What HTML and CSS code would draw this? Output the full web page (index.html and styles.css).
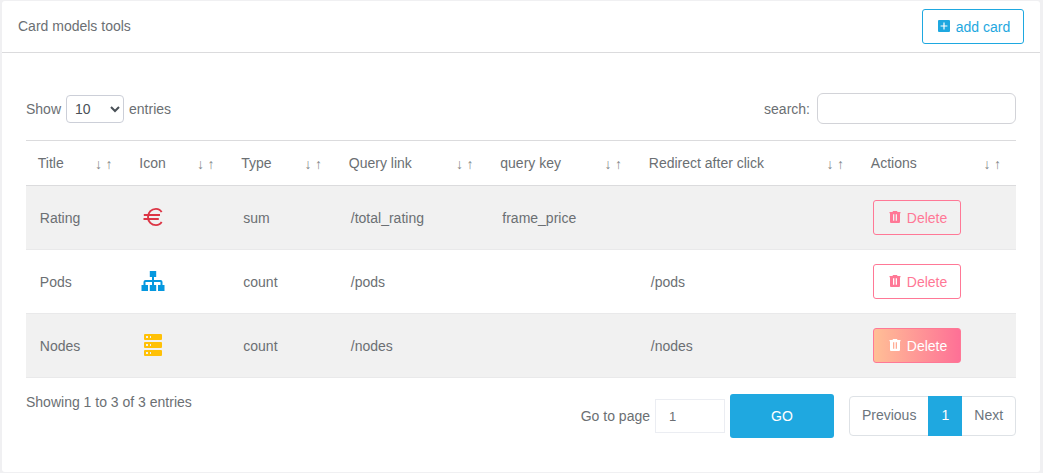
FILE: index.html
```html
<!DOCTYPE html>
<html lang="en">
<head>
<meta charset="utf-8">
<title>Card models tools</title>
<link rel="stylesheet" href="styles.css">
</head>
<body>
<svg class="sprite" width="0" height="0" aria-hidden="true">
  <symbol id="trash" viewBox="0 0 12 12">
    <path fill-rule="evenodd" d="M.5 1H3.5L4 0H8L8.500 1H11.500V2.200H.5ZM1 2.200H11V11Q11 12 10 12H2Q1 12 1 11ZM4 3.300V9.800H5.300V3.300ZM6.700 3.300V9.800H8V3.300Z"/>
  </symbol>
</svg>
<main class="card">
  <header class="card-header">
    <span class="title">Card models tools</span>
    <button class="btn btn-add"><svg class="add-icon" viewBox="0 0 12 12"><path fill-rule="evenodd" d="M1 0H11Q12 0 12 1V11Q12 12 11 12H1Q0 12 0 11V1Q0 0 1 0ZM5.400 2.600V5.400H2.600V6.600H5.400V9.400H6.600V6.600H9.400V5.400H6.600V2.600Z"/></svg>add card</button>
  </header>
  <section class="card-body">
    <div class="toolbar">
      <label class="length">Show <select><option>10</option></select> entries</label>
      <label class="search">search: <input type="text"></label>
    </div>
    <table>
      <colgroup><col class="c-title"><col class="c-icon"><col class="c-type"><col class="c-link"><col class="c-key"><col class="c-redirect"><col class="c-actions"></colgroup>
      <thead>
        <tr>
          <th><div class="head">Title<span class="sort"><i>↓</i><i>↑</i></span></div></th>
          <th><div class="head">Icon<span class="sort"><i>↓</i><i>↑</i></span></div></th>
          <th><div class="head">Type<span class="sort"><i>↓</i><i>↑</i></span></div></th>
          <th><div class="head">Query link<span class="sort"><i>↓</i><i>↑</i></span></div></th>
          <th><div class="head">query key<span class="sort"><i>↓</i><i>↑</i></span></div></th>
          <th><div class="head">Redirect after click<span class="sort"><i>↓</i><i>↑</i></span></div></th>
          <th><div class="head">Actions<span class="sort"><i>↓</i><i>↑</i></span></div></th>
        </tr>
      </thead>
      <tbody>
        <tr>
          <td>Rating</td>
          <td><svg class="icon euro" viewBox="0 0 24 24"><path d="M20.600 7.200C19.500 5 17.600 3.900 15 3.900C10.500 3.900 7 7.200 7 12S10.500 20.100 15 20.100C17.600 20.100 19.500 19 20.600 16.800M2.800 10H19M2.500 14H17.800"/></svg></td>
          <td>sum</td><td>/total_rating</td><td>frame_price</td><td></td>
          <td><button class="btn btn-delete"><svg class="trash"><use href="#trash"/></svg>Delete</button></td>
        </tr>
        <tr>
          <td>Pods</td>
          <td><svg class="icon sitemap" viewBox="0 0 24 24"><path d="M8.800 2H15.200V8H13V11H19.500Q21.500 11 21.500 13V16H23.500V22H17V16H19.500V13H13V16H15.200V22H8.800V16H11V13H4.500V16H7V22H.5V16H2.500V13Q2.500 11 4.500 11H11V8H8.800Z"/></svg></td>
          <td>count</td><td>/pods</td><td></td><td>/pods</td>
          <td><button class="btn btn-delete"><svg class="trash"><use href="#trash"/></svg>Delete</button></td>
        </tr>
        <tr>
          <td>Nodes</td>
          <td><svg class="icon server" viewBox="0 0 24 24"><path fill-rule="evenodd" d="M4 1H20Q21 1 21 2V6Q21 7 20 7H4Q3 7 3 6V2Q3 1 4 1ZM5 3V5H7V3ZM9 3V5H10V3ZM4 9H20Q21 9 21 10V14Q21 15 20 15H4Q3 15 3 14V10Q3 9 4 9ZM5 11V13H7V11ZM9 11V13H10V11ZM4 17H20Q21 17 21 18V22Q21 23 20 23H4Q3 23 3 22V18Q3 17 4 17ZM5 19V21H7V19ZM9 19V21H10V19Z"/></svg></td>
          <td>count</td><td>/nodes</td><td></td><td>/nodes</td>
          <td><button class="btn btn-delete active"><svg class="trash"><use href="#trash"/></svg>Delete</button></td>
        </tr>
      </tbody>
    </table>
    <footer class="table-footer">
      <div class="info">Showing 1 to 3 of 3 entries</div>
      <div class="goto"><label for="page">Go to page</label><input id="page" type="text" value="1"><button class="btn-go">GO</button></div>
      <nav class="pagination"><a>Previous</a><a class="current">1</a><a>Next</a></nav>
    </footer>
  </section>
</main>
</body>
</html>
```

FILE: styles.css
```css
* { box-sizing: border-box; }
body {
  margin: 0;
  height: 473px;
  padding: 1px 3px 1px 2px;
  overflow: hidden;
  background: #f0f0f2;
  color: #6b6f73;
  font: 14px/20px "Liberation Sans", Arial, sans-serif;
}
.sprite { position: absolute; }
button, input, select { font: inherit; color: inherit; }
.card { height: 471px; background: #fff; border-radius: 3px; }
.card-header {
  display: flex;
  align-items: center;
  justify-content: space-between;
  height: 52px;
  padding: 0 16px;
  border-bottom: 1px solid #dbdbdd;
}
.card-header .title { margin-top: -1px; }
.btn {
  display: flex;
  align-items: center;
  justify-content: center;
  height: 35px;
  padding: 0 0 0 2px;
  border: 1px solid;
  border-radius: 3px;
  background: none;
}
.btn svg { width: 12px; height: 12px; fill: currentColor; flex: none; }
.btn-add { width: 102px; color: #1ea8e0; }
.btn-add .add-icon { margin: -2px 6px 0 0; }
.card-body { padding: 40px 24px 0; }
.toolbar { display: flex; justify-content: space-between; height: 47px; }
.length, .search { display: flex; align-items: center; height: 32px; }
.search { height: 31px; }
.length select {
  width: 58px;
  height: 28px;
  margin: 0 5px;
  padding: 0 0 0 4px;
  border: 1px solid #cccfd8;
  border-radius: 4px;
  background: #fff;
  color: #495057;
}
.search input {
  width: 199px;
  height: 31px;
  margin-left: 7px;
  border: 1px solid #d2d3d8;
  border-radius: 6px;
  background: #fff;
}
table { width: 990px; table-layout: fixed; border-spacing: 0; }
.c-title { width: 101.500px; }
.c-icon { width: 102px; }
.c-type { width: 107.500px; }
.c-link { width: 151.500px; }
.c-key { width: 148.500px; }
.c-redirect { width: 222px; }
.c-actions { width: 157px; }
th {
  height: 46px;
  padding: 0 15px 0 11.800px;
  border-top: 1px solid #dbdbdd;
  border-bottom: 1px solid #dbdbdd;
  font-weight: 400;
  text-align: left;
}
.head { display: flex; justify-content: space-between; white-space: nowrap; }
.sort { display: flex; gap: 3.500px; padding-top: 1px; color: #858789; }
.sort i { font-style: normal; }
td { height: 64px; padding: 0 14px 0 13.800px; border-bottom: 1px solid #e9e9ea; }
td:last-child { padding-left: 14px; }
tbody tr:nth-child(odd) { background: #f1f1f1; }
.icon { display: block; width: 24px; height: 24px; margin: -2px 0 0 -.3px; fill: currentColor; }
.euro { color: #dc3545; fill: none; stroke: currentColor; stroke-width: 1.900; }
.sitemap { color: #0598df; }
.server { color: #ffc107; }
.btn-delete { width: 88px; color: #ff7896; }
.btn-delete .trash { margin: -2px 6px 0 0; }
.btn-delete.active {
  color: #fff;
  border-color: #ff7896;
  background: linear-gradient(90deg, #ffbf96, #fe7096);
}
.table-footer { display: flex; align-items: flex-start; padding-top: 16px; }
.info { flex: 1; margin-top: -2px; }
.goto { display: flex; align-items: center; height: 44px; }
.goto input {
  width: 70px;
  height: 34px;
  margin: 0 5px;
  padding: 0 13px;
  border: 1px solid #ebedf2;
  font-size: 13px;
}
.btn-go {
  width: 104px;
  height: 44px;
  padding: 0;
  border: 0;
  border-radius: 3px;
  background: #1fa8e0;
  color: #fff;
  font-size: 14px;
}
.pagination {
  display: flex;
  width: 167px;
  height: 40px;
  margin: 2px 0 0 15px;
  border: 1px solid #dee2e6;
  border-radius: 4px;
  line-height: 37px;
  color: #6c757d;
}
.pagination a { flex: 1 0 auto; text-align: center; }
.pagination .current { flex: 0 0 34px; margin: -1px 0; line-height: 39px; background: #1fa8e0; color: #fff; }
```
